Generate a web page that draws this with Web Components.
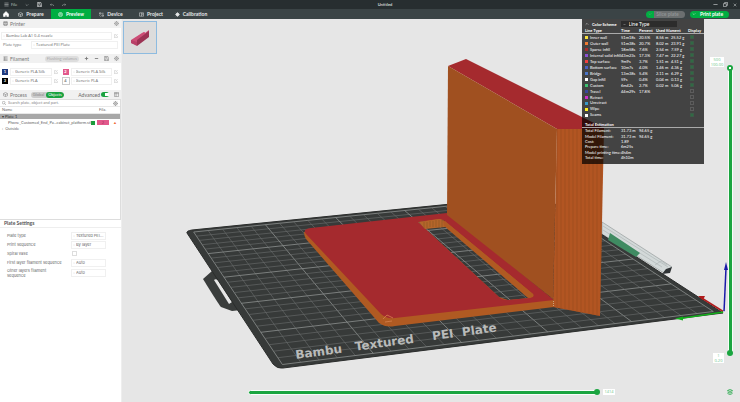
<!DOCTYPE html>
<html lang="en">
<head>
<meta charset="utf-8">
<title>Untitled</title>
<style>
html,body{margin:0;height:100%}
body{font:4px/6px "Open Sans","Noto Sans",sans-serif;color:#666;background:#e6e6e6;overflow:hidden}
</style>
</head>
<body>
<slicer-app></slicer-app>
<script>
const BASE = `<style>
*{box-sizing:border-box}
:host{display:block}
button,input,select{font:inherit;color:inherit;margin:0;padding:0;border:0;background:none;outline:0}
button{display:inline-flex;align-items:center;justify-content:center}
svg{display:block;flex:none}
</style>`;
function define(name, html, setup) {
  const t = document.createElement('template');
  customElements.define(name, class extends HTMLElement {
    constructor() { super(); this.attachShadow({mode: 'open'}); }
    connectedCallback() {
      if (this.shadowRoot.firstChild) return;
      t.innerHTML = BASE + (typeof html === 'function' ? html(this) : html);
      this.shadowRoot.append(t.content.cloneNode(true));
      if (setup) setup(this.shadowRoot, this);
    }
  });
}
const ICONS = {
  menu: '<path d="M1 2.500h10M1 6h10M1 9.500h10"/>',
  down: '<path d="M2 4l4 4 4-4"/>',
  up: '<path d="M2 8l4-4 4 4"/>',
  save: '<path d="M1 1h8l2 2v8H1z"/><path d="M3.500 1v3h4V1M3 11V7h6v4"/>',
  undo: '<path d="M4 2L1 5l3 3M1 5h7q3 0 3 4"/>',
  redo: '<path d="M8 2l3 3-3 3M11 5H4q-3 0-3 4"/>',
  home: '<path fill="currentColor" d="M6 1L1 6v5h3.500V8h3v3H11V6z"/>',
  cube: '<path d="M6 1l5 3v5l-5 2-5-2V4zM1 4l5 2 5-2M6 6v5"/>',
  layers: '<circle cx="6" cy="6" r="5"/><path d="M2 5h8M2 7.500h8M4 3h4"/>',
  device: '<path d="M1 2h4v3H1zM7 7h4v3H7zM7 3h4M1 8l3 3"/>',
  project: '<path d="M1 2h10v8H1zM6 2v8M8 4h2M8 6h2"/>',
  target: '<circle cx="6" cy="6" r="3.500" fill="currentColor"/><path d="M6 0v12M0 6h12M2 2l8 8M10 2l-8 8"/>',
  printer: '<path d="M2 1h8v3H2zM1 4h10v5H1zM3 7h6v4H3z"/>',
  list: '<path d="M1 2h10M1 5h10M1 8h10M1 11h10M4 2v9"/>',
  gear: '<circle cx="6" cy="6" r="4"/><circle cx="6" cy="6" r="1.500"/><path d="M6 0v2M6 10v2M0 6h2M10 6h2M2 2l1 1M9 9l1 1M10 2L9 3M3 9l-1 1"/>',
  edit: '<path d="M10 6v5H1V2h6M5 7l6-6"/>',
  plus: '<path stroke-width="2" d="M6 2v8M2 6h8"/>',
  minus: '<path stroke-width="2" d="M2 6h8"/>',
  search: '<circle cx="5" cy="5" r="4"/><path d="M8 8l4 4"/>',
  min: '<path stroke-width="1.500" d="M1 6h10"/>',
  max: '<path stroke-width="1.500" d="M1 4h7v7H1zM4 4V1h7v7H8"/>',
  close: '<path stroke-width="1.500" d="M2 2l8 8M10 2l-8 8"/>',
  cols: '<path d="M1 1h10v10H1zM5 1v10M1 4h10"/>',
  stack: '<path stroke-width="1.500" d="M6 1l5 2-5 2-5-2zM1 6l5 2 5-2M1 9l5 2 5-2"/>'
};
define('app-icon', h => `<style>:host{display:inline-block;flex:none}</style>
<svg width="${h.getAttribute('size') || 5}" height="${h.getAttribute('size') || 5}" viewBox="0 0 12 12" fill="none" stroke="currentColor" stroke-width="1.2" aria-hidden="true">${ICONS[h.getAttribute('name')]}</svg>`);

define('title-bar', `<style>
:host{background:#272e30;color:#d0d4d5;height:9px;display:grid;grid-template-columns:1fr auto 1fr;align-items:center}
div{display:flex;align-items:center}
.l{padding-left:4px;gap:8px}.r{justify-content:flex-end;gap:5px;padding-right:3px}
button{gap:2px}b{font:700 4px/6px Lato,sans-serif;padding-left:30px}
</style>
<div class="l"><button><app-icon name="menu"></app-icon>File</button><button aria-label="More"><app-icon name="down" size="4"></app-icon></button>
<button aria-label="Save" style="color:#fff"><app-icon name="save"></app-icon></button><button aria-label="Undo"><app-icon name="undo" size="4"></app-icon></button><button aria-label="Redo"><app-icon name="redo" size="4"></app-icon></button></div>
<b>Untitled</b>
<div class="r"><button aria-label="Minimize"><app-icon name="min"></app-icon></button><button aria-label="Restore"><app-icon name="max"></app-icon></button><button aria-label="Close"><app-icon name="close" size="4"></app-icon></button></div>`);

define('nav-tab', h => `<style>
:host{display:flex;width:40px}
button{flex:1;gap:3px;color:#e6e8e8;font:700 5px/6px Lato,sans-serif}
:host([active]) button{background:#00ae42;color:#fff}
</style><button><app-icon name="${h.getAttribute('icon')}"></app-icon><slot></slot></button>`);

define('nav-bar', `<style>
:host{display:flex;height:10px;background:#3b4446;color:#fff}
.home{width:11px}
nav{display:flex}
.act{margin-left:auto;display:flex;gap:5px;align-items:center;padding-right:11px}
.act button{height:7px;border-radius:4px;background:#00ae42;color:#fff;width:39px;padding:0 2px;font:700 5px/6px Lato,sans-serif;justify-content:flex-start}
.act span{flex:1;text-align:center}
.act .off{background:linear-gradient(90deg,#00ae42 8px,#6b6f70 8px);color:#8f9495}
</style>
<button class="home" aria-label="Home"><app-icon name="home" size="6"></app-icon></button>
<nav><nav-tab icon="cube">Prepare</nav-tab><nav-tab icon="layers" active>Preview</nav-tab><nav-tab icon="device">Device</nav-tab><nav-tab icon="project">Project</nav-tab><nav-tab icon="target">Calibration</nav-tab></nav>
<div class="act"><button class="off"><app-icon name="down" size="4"></app-icon><span>Slice plate</span></button><button><app-icon name="down" size="4"></app-icon><span>Print plate</span></button></div>`);

define('section-head', h => `<style>
:host{display:flex;align-items:center;height:9px;background:#f1f1f1;padding:0 2px 0 3px;gap:2px;color:#777;font:5px/6px Lato,sans-serif}
.end{margin-left:auto;display:flex;align-items:center;gap:5px;font-size:4px}
</style><app-icon name="${h.getAttribute('icon')}"></app-icon><slot></slot><div class="end"><slot name="end"></slot></div>`);

define('pick-box', h => `<style>
:host{display:flex;align-items:center;gap:1px;height:8px;border:1px solid #f0f0f0;padding:0 1px;background:#fff;min-width:0}
select{appearance:none;flex:1;min-width:0;height:6px;line-height:6px}
</style><app-icon name="down" size="2"></app-icon><select aria-label="${h.getAttribute('label')}"><option>${h.getAttribute('value')}</option></select>`);

define('filament-slot', h => `<style>
:host{display:flex;align-items:center;gap:2px;min-width:0}
b{width:6px;height:6px;font:700 4px/6px Lato,sans-serif;text-align:center;background:${h.getAttribute('bg')};color:${h.getAttribute('fg')};outline:${h.hasAttribute('line') ? '1px solid #ccc' : 'none'}}
pick-box{flex:1}
button{color:#aaa}
</style><b>${h.getAttribute('n')}</b><pick-box label="Filament ${h.getAttribute('n')}" value="${h.getAttribute('value')}"></pick-box><button aria-label="Edit"><app-icon name="edit" size="4"></app-icon></button>`);

define('object-tree', `<style>
:host{display:block;border:1px solid #ddd;border-left:0;background:#fff;height:121px;font-family:Lato,sans-serif}
.s{display:flex;align-items:center;gap:2px;padding:0 2px;height:6px}
.s input{flex:1;min-width:0;height:6px}.s input::placeholder{color:#888;opacity:1}
table{width:100%;border-collapse:collapse;table-layout:fixed}
td,th{padding:0;height:6px;line-height:6px;font-weight:400;text-align:left;white-space:nowrap}
th{border:solid #e8e8e8;border-width:1px 0;padding-left:2px}
.p td{background:#a8a8a8;color:#333;height:5px;line-height:5px;padding-left:2px}
.o td{height:7px}.n{padding-left:8px}
.c input{appearance:none;width:4px;height:4px;background:#1a9c3c;display:block;margin-left:1px}
.f span{display:block;background:#e2588b;color:#a33560;text-align:center;line-height:5px;width:12px}
.e{color:#f06a3a}
</style>
<div class="s"><app-icon name="search" size="4"></app-icon><input aria-label="Search" placeholder="Search plate, object and part."><app-icon name="gear"></app-icon></div>
<table><colgroup><col><col style="width:7px"><col style="width:16px"><col style="width:7px"></colgroup>
<tr><th>Name</th><th></th><th>Fila.</th><th></th></tr>
<tr class="p"><td colspan="4">▾ Plate 1</td></tr>
<tr class="o"><td class="n">Phone_Customed_End_Pa...cabinet_platform.stl</td><td class="c"><input type="checkbox" checked aria-label="Printable"></td><td class="f"><span>2</span></td><td class="e">▲</td></tr>
<tr><td style="padding-left:2px" colspan="4">› &nbsp;Outside</td></tr></table>`);

define('setting-row', `<style>
:host{display:grid;grid-template-columns:64px 35px;align-items:center;padding-left:7px;min-height:9px;line-height:5px;font-family:Inter,sans-serif}
</style><slot></slot><slot name="control"></slot>`);

define('side-panel', `<style>
:host{background:#fff;border-right:1px solid #eee;display:flex;flex-direction:column}
.pad{display:flex;flex-direction:column;gap:1px;padding:4px 3px 5px 1px}
.row{display:grid;grid-template-columns:28px 1fr;align-items:center;padding-left:2px}
.first{display:flex;align-items:center;gap:2px}.first pick-box{flex:1}
.grid{display:grid;grid-template-columns:1fr 1fr;gap:1px 5px;padding:5px 3px 5px 2px}
.chip{background:#ddd;color:#aaa;border-radius:3px;padding:0 2px;height:6px}
.seg{display:flex;background:#ccc;color:#888;border-radius:3px;height:6px;font-size:4px;overflow:hidden;margin-left:2px}
.seg button{padding:0 2px}.seg .on{background:#1aa240;color:#fff;border-radius:3px}
.sw{appearance:none;width:8px;height:5px;border-radius:3px;background:radial-gradient(circle at 6px 50%,#fff 2px,#1aa240 2px)}
label{display:flex;align-items:center;gap:1px;font-size:5px;color:#666}
h2{margin:0;font:700 5px/7px Lato,sans-serif;color:#555;padding:0 4px;border-bottom:1px solid #eee}
.set{padding-top:3px}
.cb{appearance:none;width:5px;height:5px;border:1px solid #ddd;margin-left:1px}
</style>
<section-head icon="printer">Printer<app-icon slot="end" name="gear"></app-icon></section-head>
<div class="pad"><div class="first"><pick-box label="Printer" value="Bambu Lab A1 0.4 nozzle"></pick-box><app-icon name="edit" size="4" style="color:#aaa"></app-icon></div>
<div class="row"><span>Plate type</span><pick-box label="Plate type" value="Textured PEI Plate"></pick-box></div></div>
<section-head icon="list">Filament<button slot="end" class="chip">Flushing volumes</button><button slot="end" aria-label="Add"><app-icon name="plus"></app-icon></button><button slot="end" aria-label="Remove"><app-icon name="minus"></app-icon></button><app-icon slot="end" name="save"></app-icon><app-icon slot="end" name="gear"></app-icon></section-head>
<div class="grid"><filament-slot n="1" bg="#1f3a7e" fg="#fff" value="Generic PLA Silk"></filament-slot><filament-slot n="2" bg="#e2588b" fg="#fff" value="Generic PLA Silk"></filament-slot><filament-slot n="3" bg="#000" fg="#fff" value="Generic PLA"></filament-slot><filament-slot n="4" bg="#fff" fg="#777" line value="Generic PLA"></filament-slot></div>
<section-head icon="cube">Process<div class="seg"><button>Global</button><button class="on">Objects</button></div><label slot="end">Advanced<input type="checkbox" class="sw" checked></label><app-icon slot="end" name="cols"></app-icon></section-head>
<object-tree></object-tree>
<h2>Plate Settings</h2>
<div class="set">
<setting-row>Plate type<pick-box slot="control" label="Plate type" value="Textured PEI..."></pick-box></setting-row>
<setting-row>Print sequence<pick-box slot="control" label="Print sequence" value="By layer"></pick-box></setting-row>
<setting-row>Spiral vase<input slot="control" class="cb" type="checkbox" aria-label="Spiral vase"></setting-row>
<setting-row>First layer filament sequence<pick-box slot="control" label="First layer filament sequence" value="Auto"></pick-box></setting-row>
<setting-row style="padding-top:1px"><span>Other layers filament<br>sequence</span><pick-box slot="control" label="Other layers filament sequence" value="Auto"></pick-box></setting-row>
</div>`);

define('legend-panel', `<style>
:host{display:block;width:122px;background:rgba(0,0,0,.71);color:#fff;padding:2px 0 0;font:400 4px/5px Lato,sans-serif;height:145px}
.h{display:flex;align-items:center;gap:3px;padding:0 3px;height:6px;font-weight:700}
.h div{display:flex;align-items:center;gap:3px;background:#2c2c2c;width:56px;padding:0 2px;margin-left:1px}
.h select{appearance:none;flex:1;line-height:6px;height:6px;font-size:5px;font-weight:400}
table{border-collapse:collapse;table-layout:fixed;width:100%}
td,th{padding:0;text-align:left;white-space:nowrap;line-height:5px}
.a{height:91px}
th{border-bottom:1px solid #aaa}
tr>:first-child{padding-left:3px}
i{display:inline-block;width:3px;height:3px;margin-right:2px;vertical-align:middle}
input{appearance:none;display:block;width:4px;height:4px;border:1px solid #5c5c5c;margin-left:2px}
input:checked{background:#2f6b44;border-color:#3d5a47}
.t{margin-top:4px;height:38px}
</style>
<div class="h"><app-icon name="up" size="4"></app-icon><label for="s">Color Scheme</label><div><app-icon name="down" size="3"></app-icon><select id="s"><option>Line Type</option></select></div></div>
<table class="a"><colgroup><col style="width:39px"><col style="width:18px"><col style="width:17px"><col style="width:15px"><col style="width:17px"><col></colgroup><tr><th>Line Type</th><th>Time</th><th>Percent</th><th colspan="2">Used filament</th><th>Display</th></tr></table>
<table class="t"><colgroup><col style="width:39px"><col style="width:18px"><col></colgroup><tr><th colspan="3">Total Estimation</th></tr></table>`, r => {
  const rows = [
    ['#f5e03c','Inner wall','51m18s','20.5%','8.56 m','25.52 g',1],['#f07a30','Outer wall','51m38s','20.7%','8.02 m','23.91 g',1],
    ['#a52a2e','Sparse infill','18m58s','7.6%','2.54 m','7.59 g',1],['#8a50d0','Internal solid infill','43m23s','17.3%','7.47 m','22.27 g',1],
    ['#f04040','Top surface','9m9s','3.7%','1.51 m','4.51 g',1],['#4a5fc0','Bottom surface','10m7s','4.0%','1.46 m','4.36 g',1],
    ['#4a74c8','Bridge','13m38s','5.4%','2.11 m','6.29 g',1],['#ffffff','Gap infill','59s','0.4%','0.04 m','0.13 g',1],
    ['#3cc070','Custom','6m42s','2.7%','0.02 m','5.06 g',1],['#38489c','Travel','44m29s','17.8%','','',0],
    ['#cc30cc','Retract','','','','',0],['#3898c8','Unretract','','','','',0],['#ffee20','Wipe','','','','',0],['#ffffff','Seams','','','','',1]];
  r.querySelector('.a').insertAdjacentHTML('beforeend', rows.map(([c, n, ...v]) => `<tr><td><i style="background:${c}"></i>${n}</td>${v.slice(0, 4).map(x => `<td>${x}</td>`).join('')}<td><input type="checkbox" aria-label="${n}" ${v[4] ? 'checked' : ''}></td></tr>`).join(''));
  const tot = [['Total Filament:','31.73 m','94.65 g'],['Model Filament:','31.73 m','94.65 g'],['Cost:','1.89',''],['Prepare time:','6m25s',''],['Model printing time:','4h4m',''],['Total time:','4h10m','']];
  r.querySelector('.t').insertAdjacentHTML('beforeend', tot.map(v => `<tr>${v.map(x => `<td>${x}</td>`).join('')}</tr>`).join(''));
});

define('scene-view', `<style>
:host{display:block}svg{width:100%;height:100%}
text{font:700 12px "DejaVu Sans",sans-serif;fill:#b9bbba}
</style>
<svg viewBox="122 19 618 383" preserveAspectRatio="xMidYMid slice">
<defs><clipPath id="c"><path d="M192 230L541 195 723 313 283 368Q277 369 273 364L187 233Q186 231 192 230z"/></clipPath>
<pattern id="w" width="4" height="8" patternUnits="userSpaceOnUse"><path d="M1 0v8" stroke="#a14d1d" stroke-width="1"/></pattern></defs>
<path d="M602 222L672 267 664 273 602 234z" fill="#d3d9d9" stroke="#8b9292" stroke-width=".6"/>
<path d="M603 226L668 267M603 230L662 267M655 265l6-4 6 4" stroke="#a3abab" stroke-width=".5" fill="none"/>
<path d="M666 269L672 267 670 273 662 274z" fill="#2f3335"/>
<path d="M212 271L203 279Q219 305 221 307L232 311 241 310 219 272z" fill="#3a3d3c"/>
<path d="M214 280Q216 278 219 281L232 302 229 304z" fill="#e6e6e6"/>
<path d="M192 230L541 195 723 313 283 368Q277 369 273 364L187 233Q186 231 192 230z" fill="#373a39" stroke="#2b2d2c" stroke-width="1"/>
<g id="g" clip-path="url(#c)" fill="none"></g>
<path d="M610 233L640 253 636 257 608 240z" fill="#3f8b62"/>
<g transform="translate(296 359) rotate(-7.800)"><text>Bambu</text><text x="60">Textured</text><text x="138">PEI</text><text x="168">Plate</text></g>
<path fill-rule="evenodd" fill="#b05a22" d="M304 232L446 214 554 301V307L395 326Q386 328 379 323L306 239Q304 236 304 232zM418 222L445 220 445 226 529 298 508 300 499 297z"/>
<path fill-rule="evenodd" fill="#a52a2e" d="M311 228L447 213 554 300 395 318Q386 319 381 314L306 234Q302 229 311 228zM418 222L438 219Q443 219 446 222L533 294Q535 297 530 298L508 300Q502 300 499 297z"/>
<path d="M419 222L440 219 446 222 445 227 425 229z" fill="#b5652a"/><path d="M424 222v6M427 222v6M430 221v6M433 221v6M436 220v7M439 220v7M442 220v7" stroke="#8c5a22" stroke-width=".7"/>
<path d="M443 220L446 222 533 294Q534 297 530 297.500L528 298 444 226z" fill="#b05a22"/>
<path d="M383 319l4-4 6 3M385 322l7-1" stroke="#d6824e" stroke-width=".8" fill="none"/>
<path d="M448 66L466 59 604 128 604 129H557z" fill="#a52a2e"/>
<path d="M448 66L557 129 553 299 447 215z" fill="#a05020"/>
<path d="M557 129H604L600 316 553 307z" fill="#b25522"/><path d="M557 129H604L600 316 553 307z" fill="url(#w)"/>
<path d="M553.500 301v6" stroke="#ddb" stroke-width=".6" stroke-dasharray="1 1"/>
<path d="M724 312L700 297" stroke="#b01c1c" stroke-width="1.500"/><path d="M698 296l7 0-2 4z" fill="#b01c1c"/>
<path d="M724 312L680 318.500" stroke="#13b01c" stroke-width="1.500"/><path d="M675 318.500l8-2 0 4z" fill="#13b01c"/>
<path d="M724 312L726 268" stroke="#1a1aa8" stroke-width="1.500"/><path d="M726 262l2 8h-4z" fill="#1a1aa8"/>
<circle cx="724" cy="312" r="1" fill="#eee"/>
</svg>`, r => {
  // Plate corners on screen; a projective map of the unit square gives the grid.
  const [A, B, C, D] = [[187,231],[541,195],[723,313],[277,368]];
  const sx = A[0]-B[0]+C[0]-D[0], sy = A[1]-B[1]+C[1]-D[1];
  const dx1 = B[0]-C[0], dx2 = D[0]-C[0], dy1 = B[1]-C[1], dy2 = D[1]-C[1];
  const d = dx1*dy2 - dx2*dy1, g = (sx*dy2 - dx2*sy)/d, h = (dx1*sy - sx*dy1)/d;
  const P = (u, v) => {
    const w = g*u + h*v + 1;
    return [((B[0]-A[0]+g*B[0])*u + (D[0]-A[0]+h*D[0])*v + A[0])/w, ((B[1]-A[1]+g*B[1])*u + (D[1]-A[1]+h*D[1])*v + A[1])/w].map(n => n.toFixed(1)).join(' ');
  };
  let s = '';
  const a = .015, b = .985;
  for (let i = 0; i <= 25; i++) {
    const t = a + (b - a)*i/25, k = i % 5 === 0;
    s += `<path d="M${P(t, a)}L${P(t, b)}M${P(a, t)}L${P(b, t)}" stroke="${k ? '#8d908f' : '#6c6f6e'}" stroke-width="${k ? .8 : .6}"/>`;
  }
  r.getElementById('g').innerHTML = s;
});

define('layer-slider', h => {
  const v = h.hasAttribute('vertical');
  return `<style>
:host{display:flex;align-items:center;justify-content:center;position:relative}
.bar{background:#1aa540;border:1px solid #f8fdf9;border-radius:3px;${v ? 'width:5px;height:100%' : 'height:5px;width:100%'}}
input{appearance:none;position:absolute;inset:0;width:100%;height:100%;pointer-events:none;${v ? 'writing-mode:vertical-lr;direction:rtl' : ''}}
input::-webkit-slider-runnable-track{background:none}
input::-webkit-slider-thumb{appearance:none;width:6px;height:6px;border-radius:50%;background:#1aa540;pointer-events:auto}
input.big::-webkit-slider-thumb{background:radial-gradient(circle,#fff 1px,#1aa540 1px)}
</style><div class="bar"></div><input type="range" class="${v ? 'big' : ''}" value="100" aria-label="${v ? 'Top layer' : 'Move'}">${v ? '<input type="range" value="0" aria-label="Bottom layer">' : ''}`;
});

define('preview-area', `<style>
:host{display:block;position:relative;background:#e6e6e6;min-width:0}
scene-view{position:absolute;inset:0}
legend-panel{position:absolute;right:36px;top:0}
.thumb{position:absolute;left:1px;top:2px;width:34px;height:33px;border:1px solid #8dbbe0;background:#dcdcdc}
.v{position:absolute;right:7px;top:46px;bottom:46px;width:6px}
.hs{position:absolute;left:126px;right:140px;bottom:7px;height:6px}
output{position:absolute;background:#fff;color:#6cc488;text-align:center;line-height:5px;font-size:4px}
.t{right:16px;top:38px;width:14px}.b{right:16px;bottom:39px;width:11px}.m{right:125px;bottom:7px;width:12px;height:6px;line-height:6px}
.ly{position:absolute;right:7px;bottom:7px;color:#1aa540}
</style>
<scene-view></scene-view>
<button class="thumb" aria-label="Plate 1"><svg width="24" height="24" viewBox="0 0 24 24"><path d="M3 15L16 6l1 0v3l4-3v3L8 18z" fill="#e77c9f"/><path d="M3 14L14 7l2-1 1 1 4-3v6L9 19 3 17z" fill="#cc4d76"/><path d="M9 14l12-9v6L9 20z" fill="#9c3354"/><path d="M3 14l6 2v4l-6-3z" fill="#b84068"/></svg></button>
<legend-panel></legend-panel>
<output class="t">500<br>100.00</output><layer-slider class="v" vertical></layer-slider><output class="b">1<br>0.20</output>
<layer-slider class="hs"></layer-slider><output class="m">1414</output>
<button class="ly" aria-label="Layers"><app-icon name="stack" size="6"></app-icon></button>`);

define('slicer-app', `<style>
:host{display:grid;grid-template-rows:auto auto 1fr;height:100vh}
main{display:grid;grid-template-columns:122px 1fr;min-height:0}
</style><title-bar></title-bar><nav-bar></nav-bar><main><side-panel></side-panel><preview-area></preview-area></main>`);
</script>
</body>
</html>
